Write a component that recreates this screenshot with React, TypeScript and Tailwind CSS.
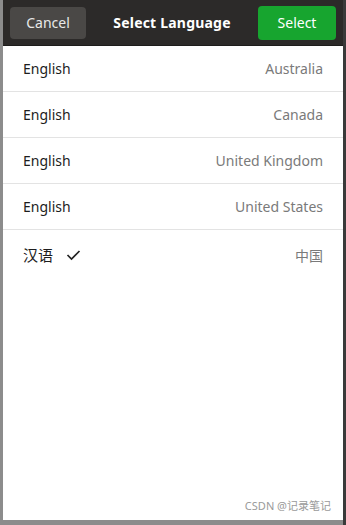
import React from 'react';

const rows = [
  { lang: 'English', region: 'Australia' },
  { lang: 'English', region: 'Canada' },
  { lang: 'English', region: 'United Kingdom' },
  { lang: 'English', region: 'United States' },
];

const font = { fontFamily: '"Noto Sans", "Noto Sans CJK SC", sans-serif' };

export default function App() {
  return (
    <div className="w-[346px] h-[525px] bg-[#8c8c8c] flex overflow-hidden" style={font}>
      {/* dialog window */}
      <div className="ml-[3px] w-[340px] h-[520px] bg-white flex flex-col relative">
        {/* header bar */}
        <div className="h-[46px] bg-[#2c2a29] border-b border-[#1e1d1c] flex items-center px-[7px] shrink-0">
          <button className="w-[76px] h-[32px] rounded-[4px] bg-[#4a4846] text-[#e8e8e8] text-[14px]">
            Cancel
          </button>
          <div className="flex-1 text-center text-white font-bold text-[14px] tracking-[0.2px]">
            Select Language
          </div>
          <button className="w-[78px] h-[34px] rounded-[4px] bg-[#17a52f] text-white text-[14px]">
            Select
          </button>
        </div>

        {/* language list */}
        {rows.map((r) => (
          <div
            key={r.region}
            className="h-[46px] border-b border-[#e3e3e3] flex items-center justify-between pl-[20px] pr-[20px] text-[14px]"
          >
            <span className="text-[#1d1d1d]">{r.lang}</span>
            <span className="text-[#7a7a7a]">{r.region}</span>
          </div>
        ))}
        <div className="h-[50px] flex items-center justify-between pl-[20px] pr-[20px] text-[14px]">
          <div className="flex items-center gap-[13px]">
            <span className="text-[#1d1d1d] text-[15px]">汉语</span>
            <svg width="15" height="12" viewBox="0 0 15 12" fill="none">
              <path d="M1.5 6 L5.5 10 L13.5 2" stroke="#222" strokeWidth="1.7" />
            </svg>
          </div>
          <span className="text-[#7a7a7a]">中国</span>
        </div>

        {/* watermark */}
        <div className="absolute right-[12px] bottom-[6px] text-[11px] text-[#9a9a9a]">
          CSDN @记录笔记
        </div>
      </div>
      <div className="w-[3px] h-full bg-[#3a3a3a]" />
    </div>
  );
}
